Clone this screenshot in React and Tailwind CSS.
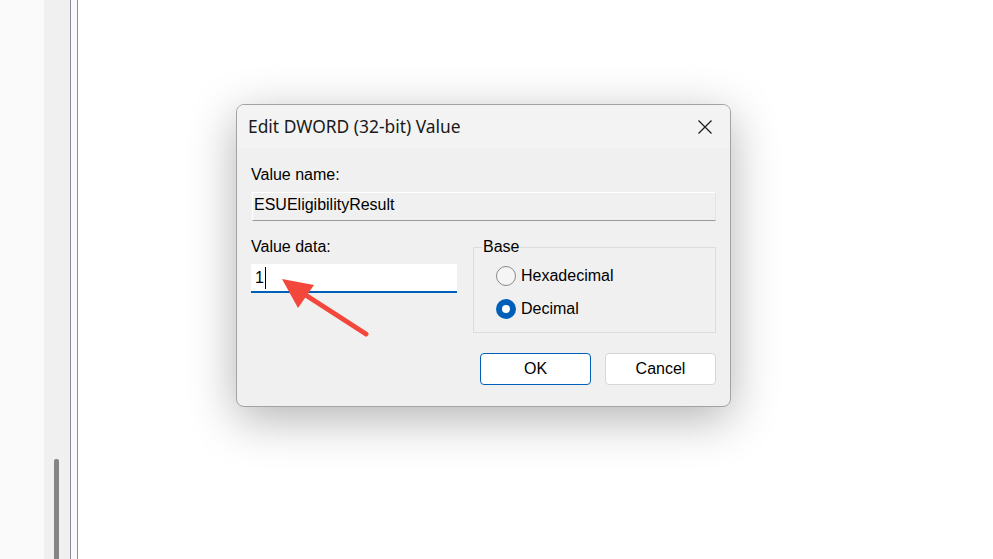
import React from 'react';

const body = { fontFamily: '"Liberation Sans", Arial, sans-serif' };
const title = { fontFamily: '"Noto Sans", "Open Sans", sans-serif' };

function Radio({ checked, label }) {
  return (
    <div className="flex items-center h-[20px]">
      {checked ? (
        <span className="w-[20px] h-[20px] rounded-full bg-[#005fb8] flex items-center justify-center">
          <span className="w-[8px] h-[8px] rounded-full bg-white" />
        </span>
      ) : (
        <span className="w-[20px] h-[20px] rounded-full border border-[#8a8a8a] bg-[#f5f5f5]" />
      )}
      <span className="ml-[5px] text-[16px] text-black leading-[20px]">{label}</span>
    </div>
  );
}

export default function App() {
  return (
    <div className="relative w-[993px] h-[559px] overflow-hidden bg-white flex" style={body}>
      <div className="w-[44px] h-full bg-[#fafafa]" />
      <div className="w-[26px] h-full bg-[#f0f0f0] relative">
        <div className="absolute left-[10px] top-[459px] w-[5px] bottom-0 rounded-t-[2px] bg-[#858585]" />
      </div>
      <div className="w-px h-full bg-[#8e8e98]" />
      <div className="w-[6px] h-full bg-[#fafafa]" />
      <div className="w-px h-full bg-[#8e8e98]" />

      <div className="flex-1 pl-[158px] pt-[104px]">
        <div className="w-[495px] h-[303px] rounded-[8px] border border-[#a3a3a3] bg-[#f0f0f0] overflow-hidden shadow-[0_12px_48px_rgba(0,0,0,0.3)] flex flex-col">
          <div className="h-[43px] bg-[#f3f3f3] flex items-center justify-between pl-[11px] pr-[16px]">
            <span className="text-[17.4px] text-[#1a1a1a]" style={title}>Edit DWORD (32-bit) Value</span>
            <svg width="16" height="16" viewBox="0 0 16 16" className="mr-[1px]">
              <path d="M1.5 1.5 L14.5 14.5 M14.5 1.5 L1.5 14.5" stroke="#1f1f1f" strokeWidth="1.3" fill="none" />
            </svg>
          </div>

          <div className="flex-1 px-[14px] pt-[17px]">
            <div className="text-[16px] leading-[20px] text-black">Value name:</div>
            <div className="mt-[7px] ml-px h-[29px] bg-[#f0f0f0] border border-t-white border-l-white border-r-[#e4e4e4] border-b-[#9a9a9a] flex items-center pl-[1px] pb-[3px] text-[16px] text-black">
              ESUEligibilityResult
            </div>

            <div className="flex mt-[16px]">
              <div className="w-[206px]">
                <div className="text-[16px] leading-[20px] text-black">Value data:</div>
                <div className="mt-[7px] h-[29px] bg-white border-b-2 border-[#005fb8] flex items-center pl-[4px] text-[16px] text-black">
                  <span>1</span>
                  <span className="ml-px w-px h-[22px] bg-black" />
                </div>
              </div>
              <fieldset className="ml-[16px] flex-1 border border-[#dcdcdc] pl-[22px] pt-[9px] pb-[14px] h-[96px]">
                <legend className="ml-[-14px] px-[1px] text-[16px] leading-[20px] text-black">Base</legend>
                <div className="flex flex-col gap-[13px]">
                  <Radio label="Hexadecimal" />
                  <Radio checked label="Decimal" />
                </div>
              </fieldset>
            </div>

            <div className="flex justify-end gap-[14px] mt-[20px]">
              <div className="w-[111px] h-[32px] rounded-[4px] border border-[#005fb8] bg-white flex items-center justify-center text-[16px] text-black">OK</div>
              <div className="w-[111px] h-[32px] rounded-[4px] border border-[#d6d6d6] bg-white flex items-center justify-center text-[16px] text-black">Cancel</div>
            </div>
          </div>
        </div>
      </div>

      <svg className="absolute inset-0 pointer-events-none" width="993" height="559">
        <line x1="304" y1="294" x2="366" y2="334" stroke="#f4473b" strokeWidth="5" strokeLinecap="round" />
        <polygon points="282,279 314,285 298,308" fill="#f4473b" />
      </svg>
    </div>
  );
}
